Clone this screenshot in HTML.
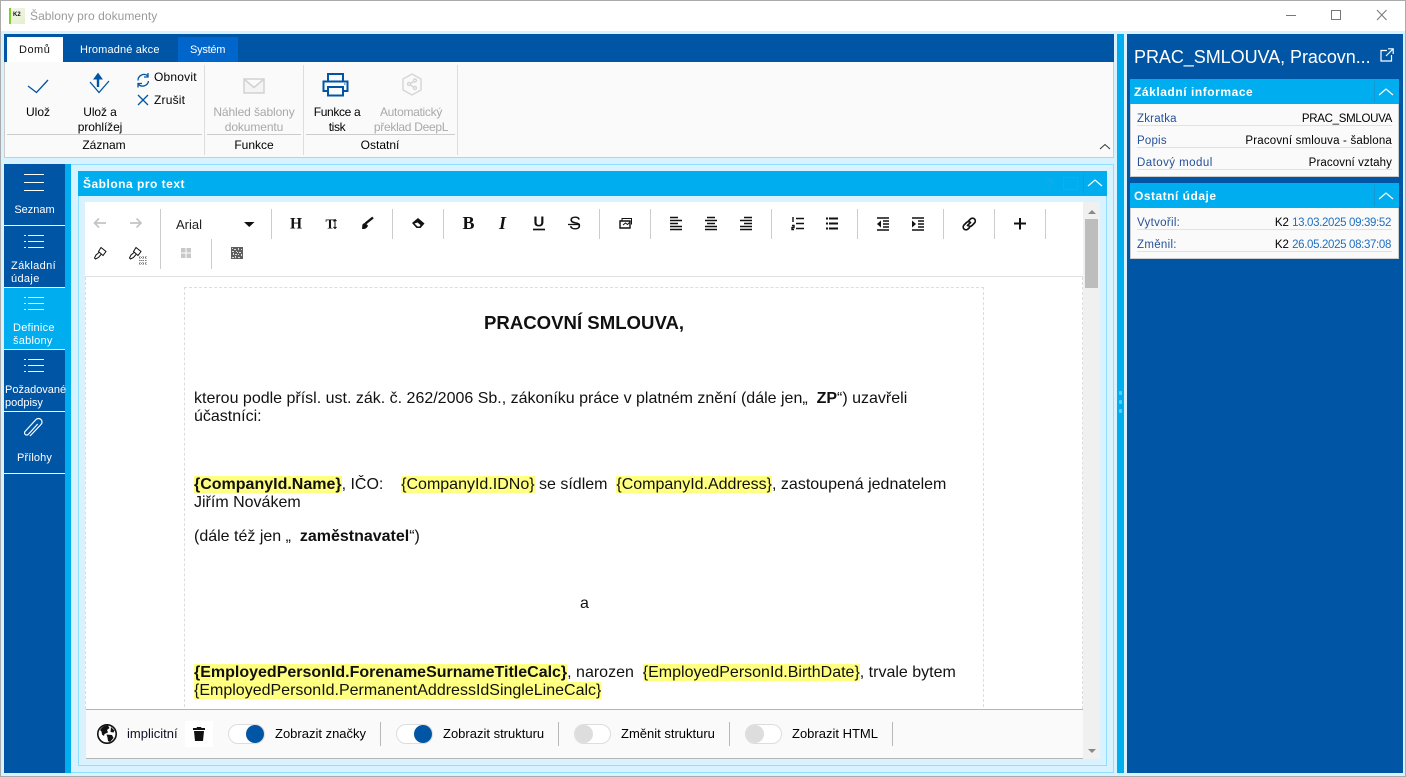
<!DOCTYPE html>
<html><head><meta charset="utf-8"><style>
*{box-sizing:border-box}
html,body{margin:0;padding:0}
body{width:1406px;height:777px;position:relative;overflow:hidden;background:#d9f2ff;font-family:"Liberation Sans",sans-serif;font-size:12px;color:#000}
.a,.t,svg.i{position:absolute}
.t{white-space:nowrap;line-height:14px;letter-spacing:.2px}
.c{text-align:center}
.w{color:#fff}
.g{color:#a9a9a9}
.b{font-weight:bold}
.d{font-size:16px;line-height:18px;letter-spacing:0;color:#111}
.f{font-size:13px;letter-spacing:0;top:727px}
mark{background:#ffff80;color:#111}
.sep{position:absolute;width:1px;height:30px;background:#ccc}
.fsep{position:absolute;width:1px;height:24px;background:#b8b8b8;top:722px}
.tg{position:absolute;width:37px;height:20px;border:1px solid #ddd;border-radius:10px;background:#fff;top:724px}
.tg i{position:absolute;top:0;width:18px;height:18px;border-radius:50%}
svg.i{overflow:visible}
</style></head><body>
<!-- window -->
<div class="a" style="left:0;top:0;width:1406px;height:31px;background:#fff"></div>
<div class="a" style="left:0;top:0;width:1406px;height:1px;background:#aaa"></div>
<div class="a" style="left:0;top:0;width:1px;height:777px;background:#aaa"></div>
<div class="a" style="left:1405px;top:0;width:1px;height:777px;background:#aaa"></div>
<div class="a" style="left:0;top:776px;width:1406px;height:1px;background:#aaa"></div>
<div class="a" style="left:9px;top:8px;width:16px;height:16px;background:linear-gradient(135deg,#f4f4f4,#e4f0c8)"></div>
<div class="a" style="left:9px;top:8px;width:2px;height:16px;background:#7ed321"></div>
<div class="a b" style="left:13px;top:12px;font-size:6px;line-height:7px;color:#111">K2</div>
<div class="t" style="left:30px;top:9px;color:#9a9a9a;font-size:12px;letter-spacing:.06px">Šablony pro dokumenty</div>
<svg class="i" style="left:1280px;top:8px" width="110" height="16" fill="none" stroke="#777" stroke-width="1"><path d="M6 7.500H16M51.500 2.500h9v9h-9zM97 2l9.500 10M106.500 2L97 12"/></svg>

<!-- ribbon -->
<div class="a" style="left:4px;top:34px;width:1110px;height:28px;background:#0055a5"></div>
<div class="a" style="left:7px;top:37px;width:56px;height:25px;background:#fff"></div>
<div class="a" style="left:178px;top:37px;width:60px;height:25px;background:#0066cc"></div>
<div class="t b" style="left:19px;top:43px;font-size:11px;font-weight:normal;letter-spacing:.5px;color:#111">Domů</div>
<div class="t w" style="left:80px;top:43px;font-size:11px;letter-spacing:.15px">Hromadné akce</div>
<div class="t w" style="left:190px;top:43px;font-size:11px;letter-spacing:-.25px">Systém</div>
<div class="a" style="left:4px;top:62px;width:1110px;height:96px;background:#fafafa;border:1px solid #ccc;border-top:0"></div>
<div class="a" style="left:204px;top:65px;width:1px;height:90px;background:#ddd"></div>
<div class="a" style="left:303px;top:65px;width:1px;height:90px;background:#ddd"></div>
<div class="a" style="left:457px;top:65px;width:1px;height:90px;background:#ddd"></div>
<div class="a" style="left:7px;top:134px;width:195px;height:1px;background:#ccc"></div>
<div class="a" style="left:207px;top:134px;width:94px;height:1px;background:#ccc"></div>
<div class="a" style="left:306px;top:134px;width:149px;height:1px;background:#ccc"></div>

<svg class="i" style="left:0;top:60px" width="470" height="50" fill="none" stroke="#0055a5" stroke-width="1.300">
<path d="M28 26l8.500 6.500L48 20"/>
<path d="M90 22l9 10.500 10-11.500"/>
<path d="M98 27V17" stroke-width="2.400"/><path d="M94 19l4-5.500 4 5.500z" fill="#0055a5" stroke-width="1"/>
<path d="M138 20.500a6 6 0 0 1 10-4.500M148 13v4h-4M148.500 21a6 6 0 0 1-10 3.500M138 27.500v-4h4"/>
<path d="M138 35l10 10M148 35l-10 10"/>
</svg>
<svg class="i" style="left:243px;top:78px" width="23" height="16" fill="#f4f4f4" stroke="#d2d2d2" stroke-width="1.500"><path d="M1 1h20v14H1zM1 1l10 8.500L21 1"/></svg>
<svg class="i" style="left:322px;top:72px" width="28" height="26" fill="none" stroke="#0055a5" stroke-width="2"><path d="M6 9V2h15v7M6 19H1.500V9.500h24V19H21M6 15h15v8.500H6z"/><path d="M22 12h1.500" stroke-width="1"/></svg>
<svg class="i" style="left:401px;top:73px" width="22" height="24" fill="none" stroke="#d5d5d5" stroke-width="1.400"><path d="M11 1l9 5v11l-9 5-9-5V6z"/><circle cx="8" cy="11" r="1.500"/><circle cx="14" cy="7.500" r="1.500"/><circle cx="14" cy="15" r="1.500"/><path d="M9.500 10.500l3-2M9.500 12l3 2"/></svg>

<div class="t c" style="left:8px;top:105px;width:60px;letter-spacing:0">Ulož</div>
<div class="t c" style="left:70px;top:105px;width:60px;line-height:15px;letter-spacing:-.1px">Ulož a<br>prohlížej</div>
<div class="t" style="left:154px;top:70px">Obnovit</div>
<div class="t" style="left:154px;top:93px">Zrušit</div>
<div class="t c g" style="left:207px;top:105px;width:94px;line-height:15px;letter-spacing:-.1px">Náhled šablony<br>dokumentu</div>
<div class="t c" style="left:307px;top:105px;width:60px;line-height:15px;letter-spacing:-.35px">Funkce a<br>tisk</div>
<div class="t c g" style="left:370px;top:105px;width:82px;line-height:15px;letter-spacing:-.3px">Automatický<br>překlad DeepL</div>
<div class="t c" style="left:64px;top:138px;width:80px;letter-spacing:0">Záznam</div>
<div class="t c" style="left:214px;top:138px;width:80px;letter-spacing:0">Funkce</div>
<div class="t c" style="left:340px;top:138px;width:80px;letter-spacing:0">Ostatní</div>
<svg class="i" style="left:1099px;top:143px" width="12" height="8" fill="none" stroke="#333"><path d="M1 6l5-4.500L11 6"/></svg>

<!-- sidebar -->
<div class="a" style="left:4px;top:164px;width:61px;height:609px;background:#0055a5"></div>
<div class="a" style="left:65px;top:164px;width:6px;height:609px;background:#00aeef"></div>
<div class="a" style="left:4px;top:288px;width:61px;height:61px;background:#00aeef"></div>
<div class="a" style="left:4px;top:225px;width:61px;height:1px;background:#fff"></div>
<div class="a" style="left:4px;top:287px;width:61px;height:1px;background:#fff"></div>
<div class="a" style="left:4px;top:349px;width:61px;height:1px;background:#fff"></div>
<div class="a" style="left:4px;top:411px;width:61px;height:1px;background:#fff"></div>
<div class="a" style="left:4px;top:473px;width:61px;height:1px;background:#fff"></div>
<svg class="i" style="left:0;top:160px" width="70" height="320" fill="none" stroke="#fff" stroke-width="1">
<path d="M24 14.500H44M24 22.500H44M24 30.500H44"/>
<path d="M28 75.500H44M28 81.500H44M28 87.500H44M24 75.500h2M24 81.500h2M24 87.500h2"/>
<path d="M28 137.500H44M28 143.500H44M28 149.500H44M24 137.500h2M24 143.500h2M24 149.500h2"/>
<path d="M28 199.500H44M28 205.500H44M28 211.500H44M24 199.500h2M24 205.500h2M24 211.500h2"/>
<path d="M31 272l11-11.500a3.500 3.500 0 0 0-5-5l-11 12a2.200 2.200 0 0 0 3.200 3l9.500-10.500" stroke-width="1.200" transform="translate(-1,4)"/>
</svg>
<div class="t c w" style="left:4px;top:203px;width:61px;font-size:11px;letter-spacing:0">Seznam</div>
<div class="t w" style="left:11px;top:260px;font-size:11px;letter-spacing:.35px;line-height:13px">Základní<br>údaje</div>
<div class="t w" style="left:13px;top:322px;font-size:11px;letter-spacing:.25px;line-height:13px">Definice<br>šablony</div>
<div class="t w" style="left:5px;top:384px;font-size:11px;letter-spacing:0;line-height:13px">Požadované<br>podpisy</div>
<div class="t c w" style="left:4px;top:451px;width:61px;font-size:11px;letter-spacing:.1px">Přílohy</div>

<!-- main panel lines -->
<div class="a" style="left:71px;top:164px;width:1043px;height:609px;border:1px solid #8fdfff;border-left:0;border-top:1px solid #8fdfff"></div>
<div class="a" style="left:78px;top:171px;width:1029px;height:595px;border:1px solid #8fdfff"></div>
<div class="a" style="left:78px;top:171px;width:1029px;height:25px;background:#00aeef"></div>
<div class="t w b" style="left:83px;top:177px;letter-spacing:.5px">Šablona pro text</div>
<svg class="i" style="left:1043px;top:175px" width="64" height="20" fill="none"><text x="3" y="13" fill="#27a5dc" font-size="12" font-family="Liberation Sans">?</text><rect x="20.500" y="2.500" width="14" height="12" stroke="#27a5dc"/><path d="M40.500 0V18" stroke="#1398cf"/><path d="M45 11l7-6 7 6" stroke="#fff" stroke-width="1.200"/></svg>

<!-- editor -->
<div class="a" style="left:85px;top:202px;width:998px;height:75px;background:#fff;border-bottom:1px solid #e0e0e0"></div>
<div class="a" style="left:85px;top:277px;width:998px;height:432px;background:#fff;border-left:1px dashed #ddd;border-right:1px dashed #ddd"></div>
<div class="a" style="left:184px;top:287px;width:800px;height:425px;border:1px dashed #ddd;border-bottom:0"></div>
<div class="a" style="left:1083px;top:202px;width:17px;height:557px;background:#f0f0f0"></div>
<div class="a" style="left:1085px;top:219px;width:13px;height:69px;background:#bdbdbd"></div>
<svg class="i" style="left:1086px;top:208px" width="12" height="546" fill="#888"><path d="M2 6l4-4 4 4zM2 541l4 4 4-4z"/></svg>

<!-- toolbar separators -->
<div class="sep" style="left:160px;top:209px"></div><div class="sep" style="left:160px;top:239px"></div>
<div class="sep" style="left:271px;top:209px"></div><div class="sep" style="left:211px;top:239px"></div>
<div class="sep" style="left:392px;top:209px"></div><div class="sep" style="left:443px;top:209px"></div>
<div class="sep" style="left:599px;top:209px"></div><div class="sep" style="left:650px;top:209px"></div>
<div class="sep" style="left:771px;top:209px"></div><div class="sep" style="left:857px;top:209px"></div>
<div class="sep" style="left:943px;top:209px"></div><div class="sep" style="left:994px;top:209px"></div><div class="sep" style="left:1045px;top:209px"></div>
<div class="t" style="left:176px;top:218px;font-size:13px;letter-spacing:0;color:#222">Arial</div>
<svg class="i" style="left:0;top:200px" width="1060" height="70" fill="none" stroke="#111" stroke-width="1.800">
<path d="M106 23H95M99 18.500L94.500 23l4.500 4.500M130 23h11M136.500 18.500L141 23l-4.500 4.500" stroke="#c4c4c4" stroke-width="1.700"/>
<path d="M244 22h10.500l-5.250 5z" fill="#111" stroke="none"/>
<g stroke="none" fill="#111" font-family="Liberation Serif" font-weight="bold">
<text x="290" y="28.500" font-size="15.500">H</text>
<text x="325.500" y="28.500" font-size="13.500">T</text>
<text x="462.500" y="29" font-size="18">B</text>
<text x="499" y="29" font-size="18" font-style="italic">I</text>
<text x="533.500" y="26.500" font-size="15" font-family="Liberation Sans">U</text>
<text x="569" y="29.500" font-size="18" font-family="Liberation Sans" font-weight="normal">S</text>
</g>
<path d="M335 19.500v9M333.500 21l1.500-1.500 1.500 1.500M333.500 27l1.500 1.500 1.500-1.500" stroke-width="1"/>
<path d="M373 17.500l-7.500 6" stroke-width="2.400"/><path d="M365 23q-3 .5-2.800 3.500 0 2-.2 2.500 5 .5 6-3.500z" fill="#111" stroke="none"/>
<path d="M418 18l6.500 5.500-4 4.500h-4l-4.500-5z" fill="#111" stroke="none"/><path d="M414.500 23.500l3 3h2l1-1.500-3-2.500z" fill="#fff" stroke="none"/>
<path d="M533 29.500h12" stroke-width="1.700"/>
<path d="M568 24.500h12" stroke-width="1.300"/>
<path d="M620 21h10v7h-10z" stroke-width="1.400"/><path d="M622 21v-2.500h9.500v6" stroke-width="1"/><path d="M623 25l2.500-2 2 1.500 2-2" stroke-width="1"/>
<path d="M670 17.500h8M670 20.500h12M670 23.500h8M670 26.500h12M670 29.500h12" stroke-width="1.600"/>
<path d="M707 17.500h8M705 20.500h12M707 23.500h8M705 26.500h12M705 29.500h12" stroke-width="1.600"/>
<path d="M744 17.500h8M740 20.500h12M744 23.500h8M740 26.500h12M740 29.500h12" stroke-width="1.600"/>
<path d="M796 18.500h8M796 23.500h8M796 28.500h8M793 17v5M792 25.500h2v2h-2v2h2" stroke-width="1.400"/>
<path d="M829 18.500h9M829 23.500h9M829 28.500h9M826 18.500h2M826 23.500h2M826 28.500h2" stroke-width="2"/>
<path d="M877 18h12M883 21h6M883 24h6M883 27h6M877 30h12" stroke-width="1.600"/><path d="M881 20.500v7l-4-3.500z" fill="#111" stroke="none"/>
<path d="M912 18h12M918 21h6M918 24h6M918 27h6M912 30h12" stroke-width="1.600"/><path d="M912 20.500v7l4-3.500z" fill="#111" stroke="none"/>
<path d="M968 21.500l2.500-2.500a2.800 2.800 0 0 1 4 4l-2.500 2.500a2.800 2.800 0 0 1-3.500.3M970 27l-2 2a2.800 2.800 0 0 1-4-4l2.500-2.500a2.800 2.800 0 0 1 3.500-.3M967 26l4-4" stroke-width="1.600"/>
<path d="M1020 18v11.500M1014 23.500h12" stroke-width="2"/>
<path d="M101 47.500l5 4-3 4-4.500-4zM99 52.500l-3 2.500-1.500 3 1 1 3-1.500 2.500-3" stroke-width="1"/>
<path d="M136 47.500l5 4-3 4-4.500-4zM134 52.500l-3 2.500-1.500 3 1 1 3-1.500 2.500-3" stroke-width="1"/>
<path d="M139 57.500h8M139 60.500h8M139 63.500h8M140 56v9M143 56v9M146 56v9" stroke="#777" stroke-width="1" stroke-dasharray="1 1"/>
<path d="M181 48h10v10h-10z" fill="#c8c8c8" stroke="none"/><path d="M186 48v10M181 53h10" stroke="#fff" stroke-width="1"/>
<path d="M231 47h12v12h-12z" fill="#5f5f5f" stroke="none"/>
<path d="M232 48h1v1h-1zM234 49h2v1h-2zM238 48h1v2h-1zM241 49h1v1h-1zM232 51h2v1h-2zM236 51h1v1h-1zM239 52h2v1h-2zM233 53h1v2h-1zM235 54h2v1h-2zM238 54h1v1h-1zM241 54h1v2h-1zM232 57h2v1h-2zM235 56h1v2h-1zM238 57h2v1h-2zM237 52h1v1h-1z" fill="#ddd" stroke="none"/>
</svg>

<!-- document -->
<div class="t b" style="left:484px;top:314px;font-size:18.600px;line-height:18px;letter-spacing:0;color:#111">PRACOVNÍ SMLOUVA,</div>
<div class="t d" style="left:194px;top:390px;line-height:18px">kterou podle přísl. ust. zák. č. 262/2006 Sb., zákoníku práce v platném znění (dále jen„ &nbsp;<b>ZP</b>“) uzavřeli<br>účastníci:</div>
<div class="t d" style="left:194px;top:476px"><mark><b>{CompanyId.Name}</b></mark>, IČO: &nbsp;&nbsp; <mark>{CompanyId.IDNo}</mark> se sídlem &nbsp;<mark>{CompanyId.Address}</mark>, zastoupená jednatelem<br>Jiřím Novákem</div>
<div class="t d" style="left:194px;top:528px">(dále též jen „ &nbsp;<b>zaměstnavatel</b>“)</div>
<div class="t d" style="left:580px;top:595px">a</div>
<div class="t d" style="left:194px;top:664px"><mark><b>{EmployedPersonId.ForenameSurnameTitleCalc}</b></mark>, narozen &nbsp;<mark>{EmployedPersonId.BirthDate}</mark>, trvale bytem<br><mark>{EmployedPersonId.PermanentAddressIdSingleLineCalc}</mark></div>

<!-- footer bar -->
<div class="a" style="left:86px;top:709px;width:997px;height:50px;background:#fafafa;border-top:1px solid #b5b5b5;border-bottom:1px solid #b5b5b5"></div>
<div class="a" style="left:185px;top:721px;width:28px;height:26px;background:#fff"></div>
<svg class="i" style="left:97px;top:724px" width="20" height="20"><circle cx="10" cy="10" r="9.200" fill="#fff" stroke="#111" stroke-width="1.600"/><path d="M3 6q3-5 8-4.500l1.500 2.500-2.500 2 1 2.500-3.500 1.500-.5 2-2-1.500-.5-3zM9.500 10.500l5.500.5 1.500 3-3.500 4-2-1-.5-3.500zM14 3l3.500 3.500-1 2-3-.5z" fill="#111"/></svg>
<svg class="i" style="left:193px;top:727px" width="12" height="14" fill="#111"><path d="M4 0h4l.500 1H12v2H0V1h3.500zM1 4h10l-1 10H2z"/></svg>
<div class="tg" style="left:228px"><i style="left:17px;background:#0055a5"></i></div>
<div class="tg" style="left:396px"><i style="left:17px;background:#0055a5"></i></div>
<div class="tg" style="left:574px"><i style="left:0;background:#ddd"></i></div>
<div class="tg" style="left:745px"><i style="left:0;background:#ddd"></i></div>
<div class="fsep" style="left:380px"></div><div class="fsep" style="left:558px"></div><div class="fsep" style="left:729px"></div><div class="fsep" style="left:892px"></div>
<div class="t f" style="left:127px;color:#112">implicitní</div>
<div class="t f" style="left:275px">Zobrazit značky</div>
<div class="t f" style="left:443px">Zobrazit strukturu</div>
<div class="t f" style="left:621px">Změnit strukturu</div>
<div class="t f" style="left:792px">Zobrazit HTML</div>

<!-- splitter -->
<div class="a" style="left:1117px;top:34px;width:7px;height:739px;background:#00aeef"></div>
<div class="a" style="left:1119px;top:391px;width:3px;height:4px;border-radius:1px;background:#4fd0ff"></div>
<div class="a" style="left:1119px;top:400px;width:3px;height:4px;border-radius:1px;background:#4fd0ff"></div>
<div class="a" style="left:1119px;top:409px;width:3px;height:4px;border-radius:1px;background:#4fd0ff"></div>

<!-- right panel -->
<div class="a" style="left:1127px;top:34px;width:276px;height:739px;background:#0055a5"></div>
<div class="t w" style="left:1134px;top:45px;font-size:18px;line-height:24px;letter-spacing:-.05px">PRAC_SMLOUVA, Pracovn...</div>
<svg class="i" style="left:1380px;top:48px" width="14" height="14" fill="none" stroke="#fff" stroke-width="1.200"><path d="M7 2.500H1v10.500h10.500V7M6 8l7-7M8 .8h5.200V6"/></svg>

<div class="a" style="left:1130px;top:79px;width:269px;height:98px;background:#fafafa;border:1px solid #ccc;border-top:0"></div>
<div class="a" style="left:1130px;top:79px;width:269px;height:25px;background:#00aeef"></div>
<div class="t w b" style="left:1134px;top:85px;letter-spacing:.55px">Základní informace</div>
<svg class="i" style="left:1374px;top:81px" width="25" height="21" fill="none"><path d="M.5 0V21" stroke="#1398cf"/><path d="M5 14l7-6 7 6" stroke="#fff" stroke-width="1.200"/></svg>
<div class="a" style="left:1137px;top:125px;width:255px;height:1px;background:#e2e2e2"></div>
<div class="a" style="left:1137px;top:147px;width:255px;height:1px;background:#e2e2e2"></div>
<div class="a" style="left:1137px;top:169px;width:255px;height:1px;background:#e2e2e2"></div>
<div class="t" style="left:1137px;top:112px;color:#24509a;font-size:11.500px">Zkratka</div>
<div class="t" style="right:14px;top:112px;font-size:11.500px;letter-spacing:-.3px">PRAC_SMLOUVA</div>
<div class="t" style="left:1137px;top:134px;color:#24509a;font-size:11.500px">Popis</div>
<div class="t" style="right:14px;top:134px;font-size:11.500px;letter-spacing:.18px">Pracovní smlouva - šablona</div>
<div class="t" style="left:1137px;top:156px;color:#24509a;font-size:11.500px;letter-spacing:.45px">Datový modul</div>
<div class="t" style="right:14px;top:156px;font-size:11.500px;letter-spacing:.1px">Pracovní vztahy</div>

<div class="a" style="left:1130px;top:183px;width:269px;height:76px;background:#fafafa;border:1px solid #ccc;border-top:0"></div>
<div class="a" style="left:1130px;top:183px;width:269px;height:25px;background:#00aeef"></div>
<div class="t w b" style="left:1134px;top:189px;letter-spacing:.5px">Ostatní údaje</div>
<svg class="i" style="left:1374px;top:185px" width="25" height="21" fill="none"><path d="M.5 0V21" stroke="#1398cf"/><path d="M5 14l7-6 7 6" stroke="#fff" stroke-width="1.200"/></svg>
<div class="a" style="left:1137px;top:229px;width:255px;height:1px;background:#e2e2e2"></div>
<div class="a" style="left:1137px;top:251px;width:255px;height:1px;background:#e2e2e2"></div>
<div class="t" style="left:1137px;top:216px;color:#24509a;font-size:11.500px;letter-spacing:.3px">Vytvořil:</div>
<div class="t" style="right:15px;top:216px;font-size:11.500px;letter-spacing:0">K2 <span style="color:#1f6fc0;letter-spacing:-.35px">13.03.2025 09:39:52</span></div>
<div class="t" style="left:1137px;top:238px;color:#24509a;font-size:11.500px;letter-spacing:.3px">Změnil:</div>
<div class="t" style="right:15px;top:238px;font-size:11.500px;letter-spacing:0">K2 <span style="color:#1f6fc0;letter-spacing:-.35px">26.05.2025 08:37:08</span></div>
</body></html>
